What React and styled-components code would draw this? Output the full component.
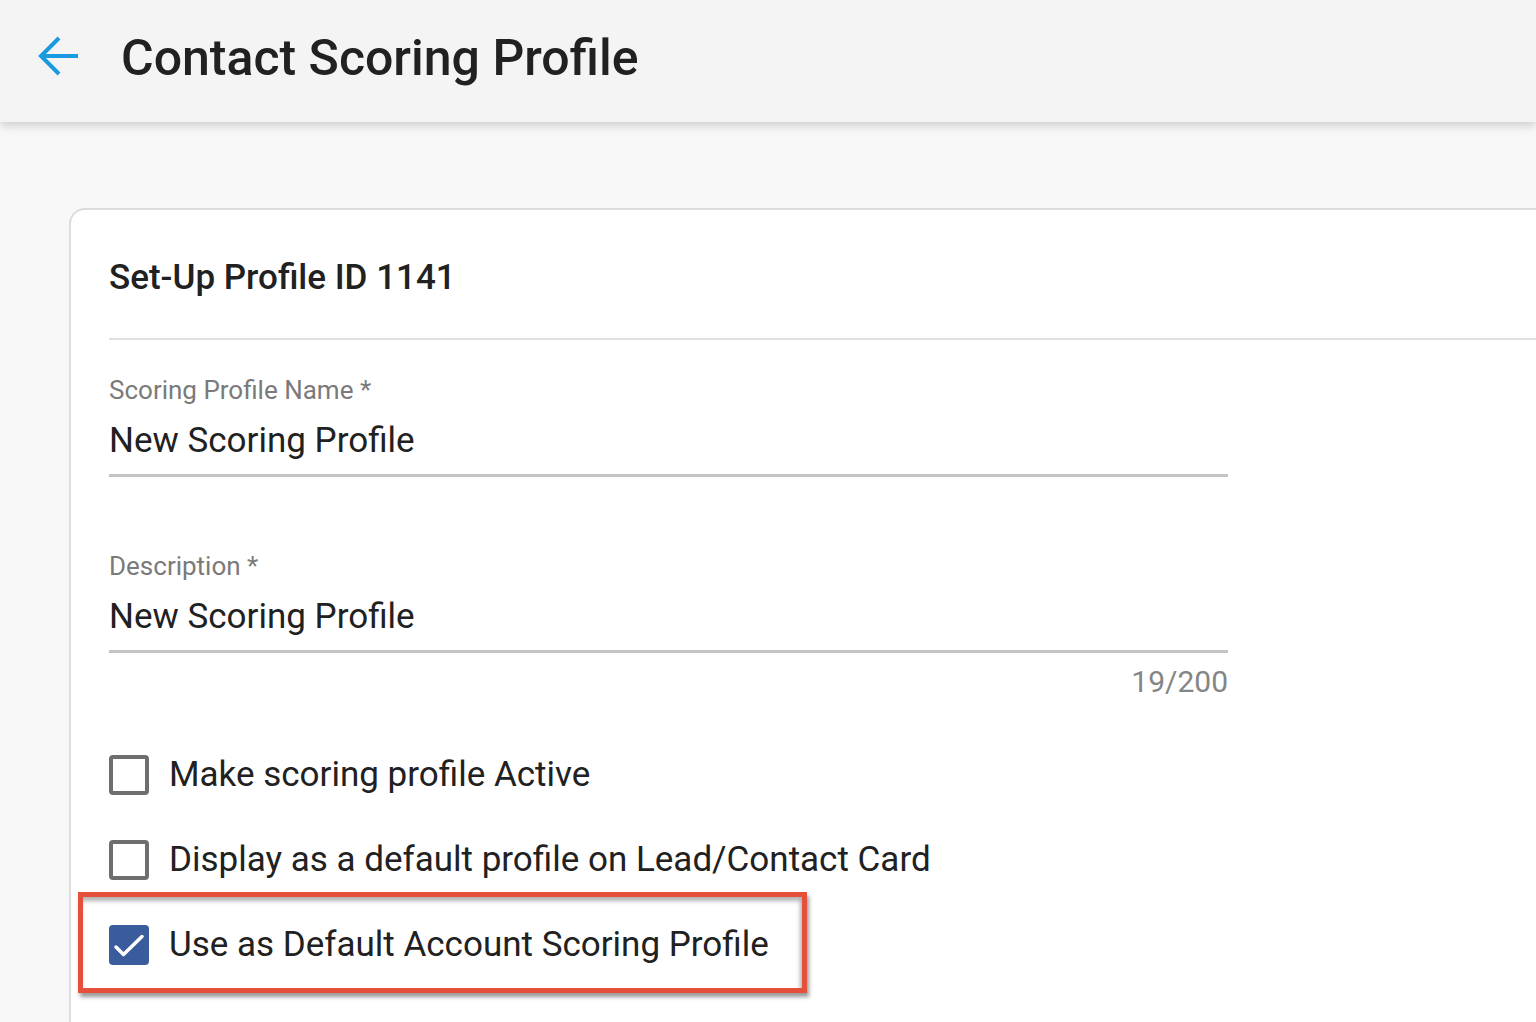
import styled, { createGlobalStyle } from 'styled-components';

const GlobalStyle = createGlobalStyle`
    html, body {
        margin: 0;
        padding: 0;
        background: #f8f8f8;
        font-family: Roboto, "Liberation Sans", Arial, sans-serif;
        color: #212121;
    }
`;

const Page = styled.div`
    min-height: 1022px;
    overflow: hidden;
    background: #f8f8f8;
`;

const Header = styled.header`
    height: 122px;
    display: flex;
    align-items: center;
    background: #f4f4f4;
    box-shadow: 0 4px 9px rgba(0, 0, 0, 0.16);
    position: relative;
    z-index: 1;
`;

const BackButton = styled.button`
    width: 48px;
    height: 48px;
    margin-left: 34px;
    margin-right: 40px;
    margin-top: -10px;
    padding: 0;
    border: none;
    background: none;
    display: flex;
    align-items: center;
    justify-content: center;
    cursor: pointer;
`;

const Title = styled.h1`
    margin: -6px 0 0 -1px;
    font-size: 50px;
    font-weight: 500;
    color: #212121;
`;

const Main = styled.main`
    padding: 86px 0 0 69px;
`;

const Card = styled.section`
    width: calc(100% + 40px);
    background: #fff;
    border: 2px solid #dcdcdc;
    border-radius: 16px 0 0 0;
    padding-left: 38px;
    padding-bottom: 60px;
    box-sizing: border-box;
`;

const CardHeader = styled.div`
    padding: 48px 0 40px;
    border-bottom: 2px solid #e0e0e0;
`;

const CardTitle = styled.h2`
    margin: 0;
    font-size: 35px;
    line-height: 40px;
    font-weight: 500;
    color: #212121;
`;

const Field = styled.div`
    width: 1119px;
    margin-top: ${({ $top }) => $top}px;
`;

const Label = styled.div`
    font-size: 26px;
    line-height: 30px;
    color: #7a7a7a;
`;

const Value = styled.div`
    margin-top: 16px;
    padding-bottom: 13px;
    font-size: 35px;
    line-height: 40px;
    color: #212121;
    border-bottom: 3px solid #c4c4c4;
`;

const Counter = styled.div`
    margin-top: 12px;
    text-align: right;
    font-size: 30px;
    line-height: 34px;
    color: #858585;
`;

const Options = styled.div`
    margin-top: 56px;
    display: flex;
    flex-direction: column;
    align-items: flex-start;
    gap: 45px;
`;

const CheckRow = styled.label`
    display: flex;
    align-items: center;
    gap: 20px;
    font-size: 35px;
    line-height: 40px;
    color: #212121;
`;

const Highlight = styled.div`
    margin-top: -33px;
    margin-left: -31px;
    padding: 28px 33px 23px 26px;
    border: 5px solid #e5503b;
    box-shadow: 2px 4px 4px rgba(0, 0, 0, 0.4), inset -2px 4px 4px rgba(0, 0, 0, 0.3);
`;

const Box = styled.span`
    width: 40px;
    height: 40px;
    box-sizing: border-box;
    border-radius: 4px;
    border: ${({ $checked }) => ($checked ? 'none' : '4px solid #6e6e6e')};
    background: ${({ $checked }) => ($checked ? '#3a5b9c' : '#fff')};
    display: flex;
    flex-shrink: 0;
`;

const Checkbox = ({ checked, children }) => (
    <CheckRow>
        <Box $checked={checked}>
            {checked && (
                <svg width="40" height="40" viewBox="0 0 40 40">
                    <path d="M7 22 L14.5 29.5 L33 11.5" fill="none" stroke="#fff" strokeWidth="3.5" strokeLinecap="round" strokeLinejoin="round" />
                </svg>
            )}
        </Box>
        {children}
    </CheckRow>
);

const App = () => {
    return (
        <>
            <GlobalStyle />
            <Page>
                <Header>
                    <BackButton aria-label="Back">
                        <svg width="44" height="42" viewBox="0 0 44 42">
                            <path d="M42 21 H5 M23 3 L5 21 L23 39" fill="none" stroke="#1a9ae0" strokeWidth="4" />
                        </svg>
                    </BackButton>
                    <Title>Contact Scoring Profile</Title>
                </Header>

                <Main>
                    <Card>
                        <CardHeader>
                            <CardTitle>Set-Up Profile ID 1141</CardTitle>
                        </CardHeader>

                        <Field $top={35}>
                            <Label>Scoring Profile Name *</Label>
                            <Value>New Scoring Profile</Value>
                        </Field>

                        <Field $top={74}>
                            <Label>Description *</Label>
                            <Value>New Scoring Profile</Value>
                            <Counter>19/200</Counter>
                        </Field>

                        <Options>
                            <Checkbox>Make scoring profile Active</Checkbox>
                            <Checkbox>Display as a default profile on Lead/Contact Card</Checkbox>
                            <Highlight>
                                <Checkbox checked>Use as Default Account Scoring Profile</Checkbox>
                            </Highlight>
                        </Options>
                    </Card>
                </Main>
            </Page>
        </>
    );
};

export default App;
